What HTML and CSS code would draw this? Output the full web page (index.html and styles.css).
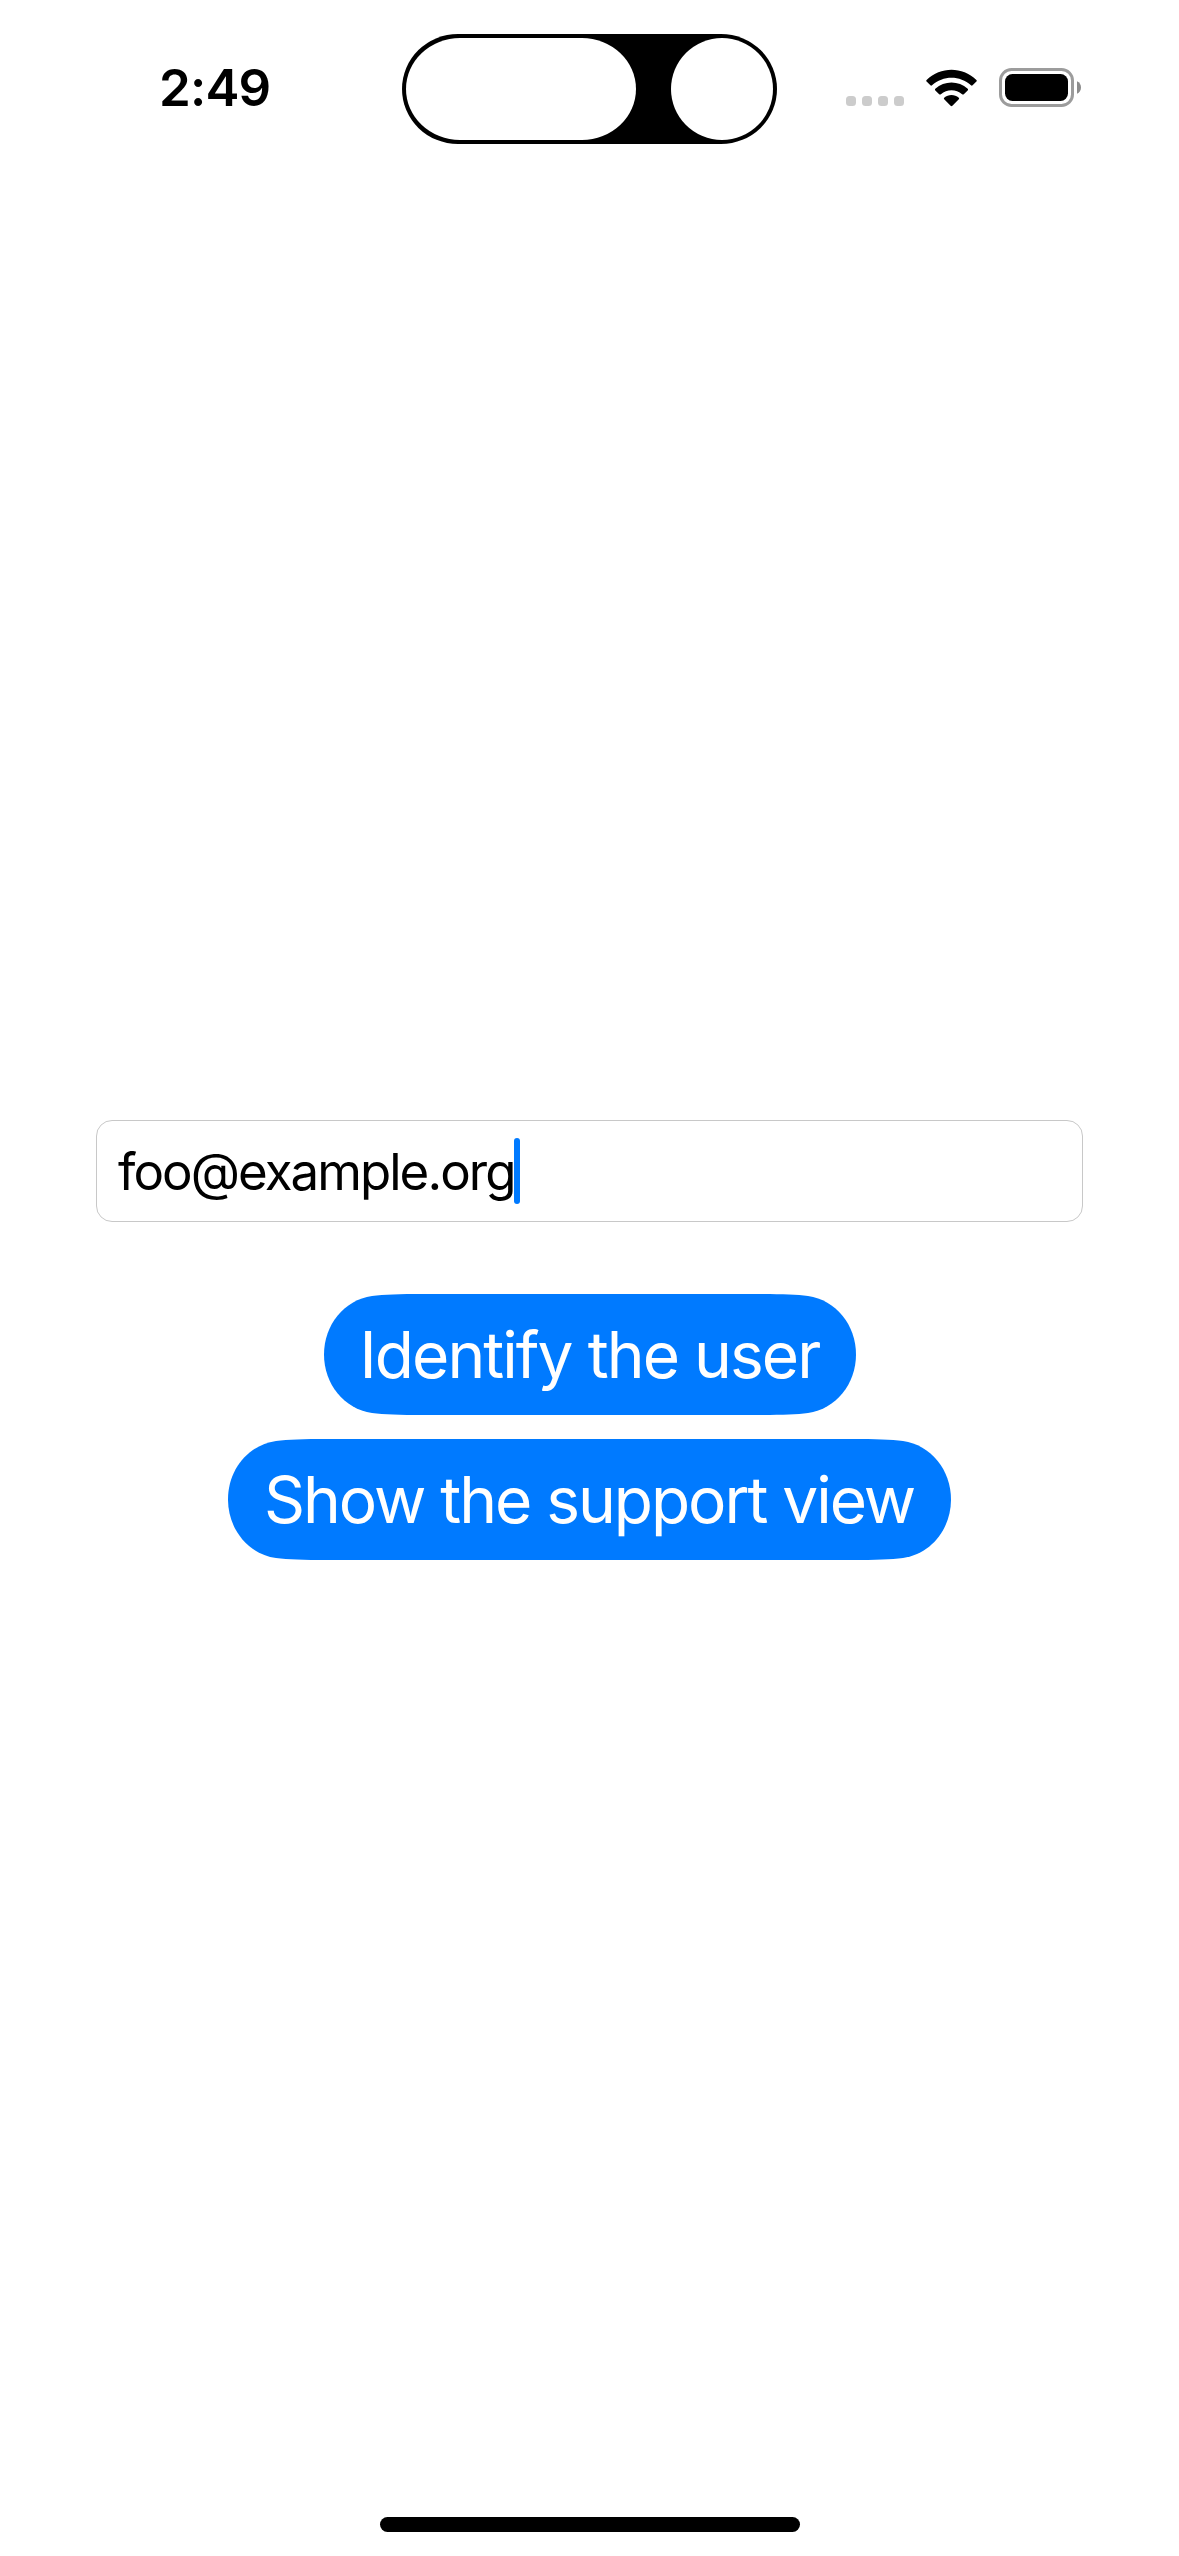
FILE: index.html
```html
<!DOCTYPE html>
<html lang="en">
<head>
<meta charset="utf-8">
<title>Support</title>
<link rel="stylesheet" href="styles.css">
</head>
<body>
<div class="screen">
  <header class="status-bar">
    <div class="clock"><span>2:49</span></div>
    <div class="island">
      <span class="island-pill"></span>
      <span class="island-lens"></span>
    </div>
    <div class="indicators">
      <div class="signal"><i></i><i></i><i></i><i></i></div>
      <svg class="wifi" viewBox="0 0 51 38" width="51" height="38">
        <path d="M.6 11Q-.2 11.8.6 12.6L4.4 16.3Q5.2 17 6 16.3C17 6.3 34 6.3 45 16.3Q45.800 17 46.6 16.3L50.4 12.6Q51.200 11.8 50.4 11C36.300-2.700 14.700-2.700.6 11Z"/>
        <path d="M9.300 19.800Q8.500 20.600 9.300 21.400L13.200 25.200Q14 26 14.900 25.200C20.900 20 30.100 20 36.100 25.200Q37 26 37.800 25.200L41.700 21.400Q42.500 20.600 41.700 19.800C32.600 11.400 18.400 11.400 9.300 19.800Z"/>
        <path d="M18.200 28.700Q17.400 29.500 18.200 30.300L24.600 36.800Q25.500 37.600 26.400 36.800L32.800 30.300Q33.600 29.500 32.800 28.700C28.600 25.200 22.400 25.200 18.200 28.700Z"/>
      </svg>
      <svg class="battery" viewBox="0 0 82 39" width="82" height="39">
        <rect x="1.500" y="1.500" width="72" height="36" rx="11" fill="none" stroke="#9c9c9c" stroke-width="3"/>
        <rect x="6" y="6" width="63" height="27" rx="7.500"/>
        <path d="M78 13.200C80.600 14.300 82 16.700 82 19.500S80.600 24.700 78 25.800Z" fill="#8c8c8c"/>
      </svg>
    </div>
  </header>
  <main class="form">
    <div class="field"><span class="value">foo@example.org</span><span class="caret"></span></div>
    <button class="button identify" type="button">
      <svg class="cap" viewBox="0 0 100 121" width="100" height="121"><path d="M100 0C75 0 60 .5 48 2C20 6 0 31 0 60.500S20 115 48 119C60 120.500 75 121 100 121Z"/></svg>
      <span class="label">Identify the user</span>
      <svg class="cap cap-end" viewBox="0 0 100 121" width="100" height="121"><path d="M100 0C75 0 60 .5 48 2C20 6 0 31 0 60.500S20 115 48 119C60 120.500 75 121 100 121Z"/></svg>
    </button>
    <button class="button support" type="button">
      <svg class="cap" viewBox="0 0 100 121" width="100" height="121"><path d="M100 0C75 0 60 .5 48 2C20 6 0 31 0 60.500S20 115 48 119C60 120.500 75 121 100 121Z"/></svg>
      <span class="label">Show the support view</span>
      <svg class="cap cap-end" viewBox="0 0 100 121" width="100" height="121"><path d="M100 0C75 0 60 .5 48 2C20 6 0 31 0 60.500S20 115 48 119C60 120.500 75 121 100 121Z"/></svg>
    </button>
  </main>
  <div class="home-indicator"></div>
</div>
</body>
</html>
```
FILE: styles.css
```css
* { box-sizing: border-box; }

body {
  margin: 0;
  background: #fff;
  color: #000;
  font-family: Inter, "Liberation Sans", sans-serif;
}

.screen {
  display: flex;
  flex-direction: column;
  width: 1179px;
  height: 2556px;
  padding-bottom: 24px;
}

.status-bar {
  display: grid;
  grid-template-columns: 402px 375px 1fr;
  height: 177px;
  padding-top: 34px;
  align-items: start;
}

.clock {
  height: 110px;
  padding-left: 159px;
  font-size: 51px;
  font-weight: 600;
  line-height: 108px;
  letter-spacing: -0.8px;
  white-space: nowrap;
}

.island {
  display: flex;
  justify-content: space-between;
  height: 110px;
  padding: 4px;
  border-radius: 56px / 55px;
  background: #000;
}

.island-pill,
.island-lens {
  height: 102px;
  border-radius: 51px;
  background: #fff;
}

.island-pill {
  width: 230px;
  border-radius: 54px / 51px;
}

.island-lens { width: 102px; }

.indicators {
  display: flex;
  align-items: flex-start;
  padding: 34px 0 0 69px;
}

.signal {
  display: flex;
  gap: 6px;
  margin: 28px 22px 0 0;
}

.signal i {
  width: 10px;
  height: 10px;
  border-radius: 3.5px;
  background: #ccc;
}

.wifi { margin: 1px 22px 0 0; }

.form {
  display: flex;
  flex: 1;
  flex-direction: column;
  align-items: center;
  padding-top: 943px;
}

.field {
  display: flex;
  align-items: center;
  width: 987px;
  height: 102px;
  margin-bottom: 72px;
  padding-left: 21px;
  border: 1px solid #c8c8c8;
  border-radius: 16px;
}

.value {
  width: 396px;
  padding-top: 2px;
  font-size: 51px;
  line-height: 66px;
  letter-spacing: -1.95px;
  white-space: nowrap;
}

.caret {
  width: 6px;
  height: 66px;
  border-radius: 3px;
  background: #007aff;
}

.button {
  display: flex;
  align-items: center;
  height: 121px;
  margin: 0 0 24px;
  padding: 0;
  border: 0;
  background: none;
  color: #fff;
  font: 400 64px/121px Inter, "Liberation Sans", sans-serif;
}

.cap {
  flex: none;
  fill: #007aff;
}

.cap-end { transform: scaleX(-1); }

.label {
  position: relative;
  z-index: 1;
  flex: 1;
  min-width: 0;
  height: 121px;
  margin: 0 -1px;
  background: #007aff;
  white-space: nowrap;
  text-align: left;
  text-indent: -63px;
}

.identify {
  width: 532px;
  letter-spacing: -1.93px;
}

.support {
  width: 723px;
  letter-spacing: -2.04px;
}

.home-indicator {
  align-self: center;
  width: 420px;
  height: 15px;
  border-radius: 7.5px;
  background: #000;
}
```
